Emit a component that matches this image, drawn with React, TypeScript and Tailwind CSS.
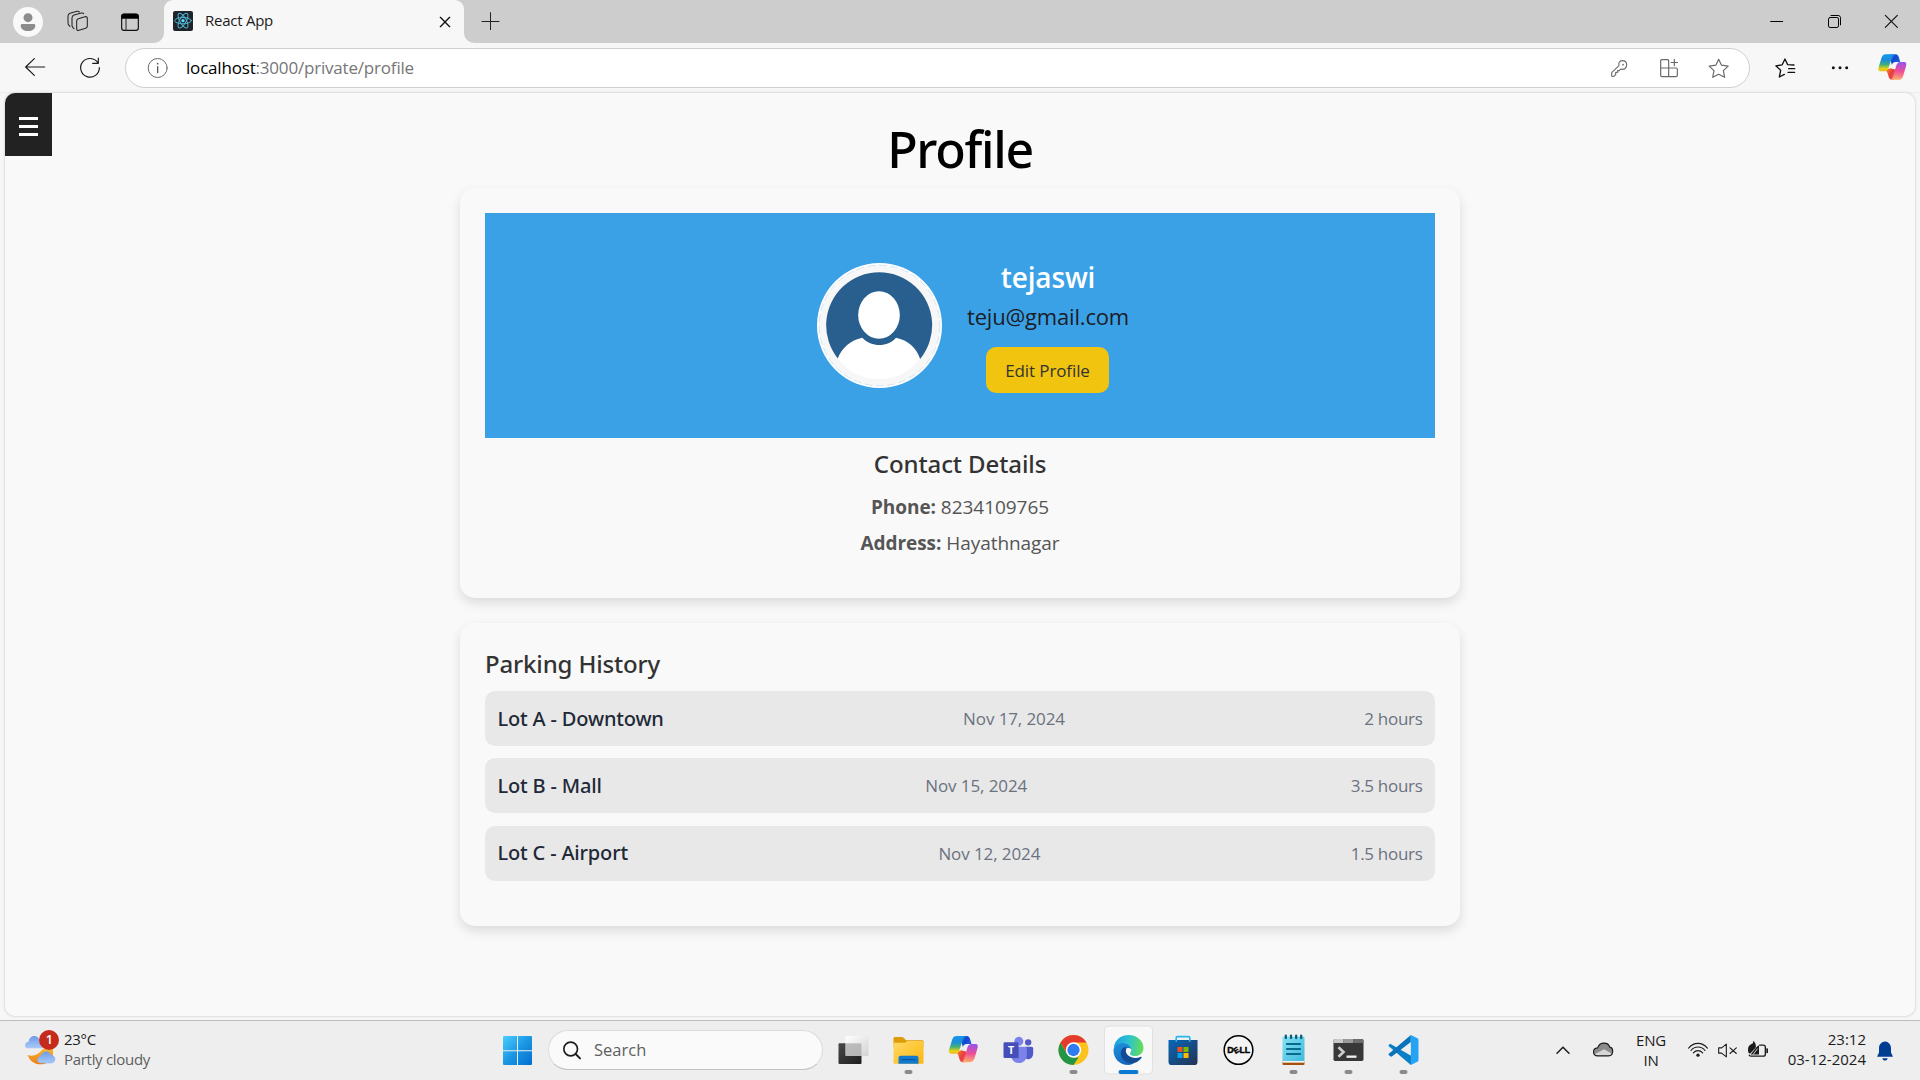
import type { ReactNode } from "react";

function Icon({ box, className, children }: { box: string; className: string; children: ReactNode }) {
  return (
    <svg viewBox={box} className={`shrink-0 ${className}`} fill="none" stroke="none" strokeLinecap="round" strokeLinejoin="round">
      {children}
    </svg>
  );
}

/* ---------- Copilot mark, shared by the toolbar and the taskbar ---------- */
function CopilotMark({ id }: { id: string }) {
  return (
    <>
      <defs>
        <linearGradient id={`${id}a`} x1="0" y1="0" x2="0" y2="1">
          <stop offset="0" stopColor="#1496f0" />
          <stop offset="0.35" stopColor="#1c8fd6" />
          <stop offset="0.6" stopColor="#3fae7e" />
          <stop offset="0.85" stopColor="#e8d312" />
          <stop offset="1" stopColor="#f7b51c" />
        </linearGradient>
        <linearGradient id={`${id}b`} x1="0.4" y1="0" x2="0.3" y2="1">
          <stop offset="0" stopColor="#9a52ec" />
          <stop offset="0.5" stopColor="#ee4f96" />
          <stop offset="1" stopColor="#ffb067" />
        </linearGradient>
        <linearGradient id={`${id}c`} x1="0" y1="0" x2="1" y2="0.6">
          <stop offset="0" stopColor="#25b2ef" />
          <stop offset="0.5" stopColor="#1345d0" />
          <stop offset="1" stopColor="#1a62dc" />
        </linearGradient>
        <linearGradient id={`${id}d`} x1="0" y1="0" x2="1" y2="0.6">
          <stop offset="0" stopColor="#f79a25" />
          <stop offset="0.6" stopColor="#e83e3a" />
          <stop offset="1" stopColor="#f25a6c" />
        </linearGradient>
      </defs>
      <path d="M34 4h20c7 0 9 4 11 10l4 14H55c-7 0-10 3-12 9z" fill={`url(#${id}c)`} />
      <path d="M20 54c6 0 8 3 10 10l3 10c2 6 4 9 11 9h5l10-30-20-6z" fill={`url(#${id}d)`} />
      <path d="M25 4h28c-6 0-8 4-10 10L33 46c-2 7-5 11-12 11H9C1 57 0 51 2 44l9-29C14 7 17 4 25 4z" fill={`url(#${id}a)`} />
      <path d="M63 83H37c6 0 8-4 10-10l9-32c2-8 6-13 13-13h11c8 0 9 6 7 13l-9 30c-3 8-7 12-15 12z" fill={`url(#${id}b)`} />
    </>
  );
}

/* ---------- Browser ---------- */
function TitleBar() {
  return (
    <div className="flex h-[43px] items-center bg-[#cdcdcd]">
      <Icon box="36 15 96 96" className="ml-3 h-8 w-8">
        <circle cx="84" cy="63" r="45" fill="#f9f9f9" />
        <circle cx="84" cy="50" r="13.5" fill="#8c8c8c" />
        <path d="M67 69h34c3 0 5 2 5 5 0 9-9 16-22 16s-22-7-22-16c0-3 2-5 5-5z" fill="#8c8c8c" />
      </Icon>
      <Icon box="198 30 69 69" className="ml-[22px] h-[23px] w-[23px]">
        <g stroke="#262626" strokeWidth="3.2">
          <path d="M235 56l20-6q7-1 7 6v22q0 5-5 7l-20 6q-7 2-7-5V63q0-5 5-7z" />
          <path d="M222 86l-3-3q-3-3-3-7V54q0-7 6-9l22-6q4-1 7 2" />
          <path d="M210 79l-3-3q-3-3-3-7V49q0-7 6-9l21-6q4-1 7 2" />
        </g>
      </Icon>
      <Icon box="360 33 60 60" className="ml-[31px] h-5 w-5">
        <rect x="365" y="39" width="50" height="49" rx="7" stroke="#111" strokeWidth="3.5" />
        <path d="M364 53v-8c0-4 3-7 7-7h38c4 0 7 3 7 7v8z" fill="#000" />
        <path d="M378 53v35" stroke="#222" strokeWidth="3" />
      </Icon>
      <div className="ml-[14px] flex h-full items-end">
        <svg className="h-[10px] w-[10px]" viewBox="0 0 10 10"><path d="M10 0v10H0A10 10 0 0 0 10 0z" fill="#f7f7f7" /></svg>
        <div className="flex h-full w-[300px] items-center rounded-t-[9px] bg-[#f7f7f7]">
          <Icon box="519 36 60 60" className="mb-px ml-[9px] h-5 w-5">
            <rect x="519" y="36" width="60" height="60" rx="6" fill="#20232a" />
            <g stroke="#4fb4d0" strokeWidth="3">
              <ellipse cx="549" cy="65" rx="25" ry="9.5" />
              <ellipse cx="549" cy="65" rx="25" ry="9.5" transform="rotate(60 549 65)" />
              <ellipse cx="549" cy="65" rx="25" ry="9.5" transform="rotate(120 549 65)" />
            </g>
            <circle cx="549" cy="65" r="5" fill="#61dafb" />
          </Icon>
          <span className="mb-[3px] ml-[12px] text-[15px] leading-5 tracking-[-0.25px] text-[#1b1b1b]">React App</span>
          <Icon box="1315 48 36 36" className="mr-[13px] ml-auto h-3 w-3">
            <path d="M1319 52l28 28M1347 52l-28 28" stroke="#111" strokeWidth="4" />
          </Icon>
        </div>
        <svg className="h-[10px] w-[10px]" viewBox="0 0 10 10"><path d="M0 0v10h10A10 10 0 0 1 0 0z" fill="#f7f7f7" /></svg>
      </div>
      <Icon box="1443 36 57 57" className="mb-px ml-[7px] h-[19px] w-[19px]">
        <path d="M1446 64.500h51M1471.500 38v51" stroke="#222" strokeWidth="3" />
      </Icon>
      <div className="mr-[21px] ml-auto flex items-center gap-[42px]">
        <Icon box="627 42 48 48" className="h-4 w-4"><path d="M632 64.500h36" stroke="#000" strokeWidth="3" /></Icon>
        <Icon box="798 42 45 45" className="h-[15px] w-[15px]">
          <rect x="802.500" y="52.500" width="30" height="30" rx="5" stroke="#000" strokeWidth="3" />
          <path d="M810 46.500h21c5 0 7.500 3 7.500 8v20" stroke="#000" strokeWidth="3" />
        </Icon>
        <Icon box="972 42 45 45" className="h-[15px] w-[15px]"><path d="M976 46l36 36M1012 46l-36 36" stroke="#111" strokeWidth="3.500" /></Icon>
      </div>
    </div>
  );
}

function Toolbar() {
  return (
    <div className="flex h-[49px] items-center bg-[#f7f7f7] pt-px">
      <Icon box="72 171 66 66" className="ml-6 h-[22px] w-[22px]">
        <path d="M134 201H78M103 176l-26 25 26 25" stroke="#1a1a1a" strokeWidth="3.500" />
      </Icon>
      <Icon box="237 171 66 66" className="ml-[33px] h-[22px] w-[22px]">
        <path d="M294 189A28 28 0 1 0 298 203M295 174v16h-17" stroke="#1a1a1a" strokeWidth="3.500" />
      </Icon>
      <div className="ml-6 flex h-10 w-[1625px] items-center rounded-full border border-[#cfcfcf] bg-white">
        <Icon box="441 171 66 66" className="ml-[21px] h-[22px] w-[22px]">
          <circle cx="473" cy="204" r="28.500" stroke="#6a6a6a" strokeWidth="3" />
          <path d="M473 200v18" stroke="#5a5a5a" strokeWidth="4" />
          <circle cx="473" cy="191" r="2.500" fill="#5a5a5a" />
        </Icon>
        <span className="ml-[17px] text-[17px] leading-6 tracking-[-0.19px] text-[#767676]">
          <span className="text-black">localhost</span>:3000/private/profile
        </span>
        <Icon box="150 174 54 63" className="ml-auto h-[21px] w-[18px]">
          <path d="M155 228v-10l22-21c-3-10 4-15 10-15 8 0 13 6 13 13 0 8-6 14-14 13l-4-1-4 5h-5v5h-6v7l-4 4c-5 2-8 2-8 0z" stroke="#707070" strokeWidth="3.500" />
          <circle cx="189" cy="194" r="2.500" fill="#666" />
        </Icon>
        <Icon box="297 174 60 60" className="ml-[31px] h-5 w-5">
          <path d="M326 204v-22q0-3-3-3h-18q-3 0-3 3v44q0 4 4 4h42q4 0 4-4v-18q0-4-4-4h-46M326 204v26M343 178v19M333.500 187.500h19" stroke="#686868" strokeWidth="3.500" />
        </Icon>
        <Icon box="444 171 66 66" className="mr-[19px] ml-[29px] h-[22px] w-[22px]">
          <path d="M476 178l8.500 17.500 20 3-14.500 13.500 4 20-18-9.500-18 9.500 4-20-14.500-13.500 20-3z" stroke="#686868" strokeWidth="3.500" />
        </Icon>
      </div>
      <Icon box="642 171 66 66" className="ml-6 h-[22px] w-[22px]">
        <path d="M673 223l-15 8 4-20-14.500-13.500 19-3L675 177l8 17 19 1M686 206h18M684 217h20" stroke="#111" strokeWidth="4" />
      </Icon>
      <Icon box="810 180 60 48" className="ml-[34px] h-4 w-5">
        <g fill="#111"><circle cx="820" cy="203" r="4.500" /><circle cx="840" cy="203" r="4.500" /><circle cx="860" cy="203" r="4.500" /></g>
      </Icon>
      <Icon box="0 0 90 90" className="mb-px ml-7 h-[29px] w-[29px]"><CopilotMark id="tb" /></Icon>
    </div>
  );
}

/* ---------- Page ---------- */
const history = [
  { lot: "Lot A - Downtown", date: "Nov 17, 2024", time: "2 hours" },
  { lot: "Lot B - Mall", date: "Nov 15, 2024", time: "3.5 hours" },
  { lot: "Lot C - Airport", date: "Nov 12, 2024", time: "1.5 hours" },
];

function Avatar() {
  return (
    <Icon box="111 459 375 375" className="mt-[50px] h-[125px] w-[125px]">
      <circle cx="298.500" cy="646.500" r="187.500" fill="#fff" />
      <circle cx="298.500" cy="646.500" r="181" fill="#f7f7f7" stroke="#c9e1f2" strokeWidth="2.500" strokeDasharray="22 12" />
      <path d="M174 746A159 159 0 1 1 421 746L298 770z" fill="#285f8f" />
      <path d="M173 746C184 715 211 690 247 683c27 29 76 29 101 0 36 7 63 32 72 63-28 38-72 61-122 61s-97-23-125-61z" fill="#fff" />
      <ellipse cx="297" cy="615" rx="62.500" ry="71.500" fill="#fff" />
    </Icon>
  );
}

function Page() {
  return (
    <div className="flex flex-1 bg-[#f7f7f7] px-[5px] pb-1">
      <main className="relative w-full overflow-hidden rounded-[10px] bg-[#f9f9f9] shadow-[0_0_2px_1px_#dedede]">
        <button className="absolute top-0 left-0 flex h-[63px] w-[47px] flex-col items-center justify-center gap-[5px] bg-[#222] pt-[3px]">
          <span className="h-[3px] w-[19px] bg-white" />
          <span className="h-[3px] w-[19px] bg-white" />
          <span className="h-[3px] w-[19px] bg-white" />
        </button>
        <div className="mx-auto w-[1000px]">
          <h1 className="mt-[26px] mb-[9px] h-[60px] text-center font-['Noto_Sans'] text-[50px] leading-[60px] font-medium tracking-[-1.3px] text-black">Profile</h1>
          <section className="h-[410px] rounded-[15px] bg-[#f9f9f9] px-[25px] pt-[25px] shadow-[0_5px_12px_rgba(0,0,0,0.12)]">
            <div className="flex h-[225px] bg-[#3ba1e7] pl-[332px]">
              <Avatar />
              <div className="mt-[46px] ml-[25px] flex w-[162px] flex-col items-center whitespace-nowrap">
                <h2 className="text-[28px] leading-9 font-semibold tracking-[-0.15px] text-white">tejaswi</h2>
                <p className="mt-[5px] text-[22px] leading-8 tracking-[-0.18px] text-[#1c1c24]">teju@gmail.com</p>
                <button className="mt-[15px] mr-px h-[46px] w-[123px] rounded-[10px] bg-[#f1c40f] pt-px text-[17px] tracking-[-0.1px] text-[#333]">Edit Profile</button>
              </div>
            </div>
            <h3 className="mt-[11px] text-center font-['Noto_Sans'] text-2xl leading-[30px] font-medium tracking-[-0.1px] text-[#333]">Contact Details</h3>
            <div className="mt-[10px] text-center text-[19px] leading-9 tracking-[-0.05px] text-[#555]">
              <p><strong className="font-bold">Phone:</strong> 8234109765</p>
              <p><strong className="font-bold">Address:</strong> Hayathnagar</p>
            </div>
          </section>
          <section className="mt-[25px] h-[303px] rounded-[15px] bg-[#f9f9f9] px-[25px] pt-[26px] shadow-[0_5px_12px_rgba(0,0,0,0.12)]">
            <h3 className="font-['Noto_Sans'] text-2xl leading-[30px] font-medium tracking-[-0.15px] text-[#333]">Parking History</h3>
            <ul className="mt-[12px] flex flex-col gap-[12.4px]">
              {history.map((h) => (
                <li key={h.lot} className="flex h-[55px] items-center justify-between rounded-[10px] bg-[#e8e8e8] px-[12.5px]">
                  <span className="font-['Noto_Sans'] text-[20px] font-medium tracking-[-0.17px] text-[#1f2937]">{h.lot}</span>
                  <span className="text-[17px] tracking-[-0.1px] text-[#6b7280]">{h.date}</span>
                  <span className="text-[17px] tracking-[-0.3px] text-[#6b7280]">{h.time}</span>
                </li>
              ))}
            </ul>
          </section>
        </div>
      </main>
    </div>
  );
}

/* ---------- Taskbar ---------- */
function Cell({ box, children }: { box: string; children: ReactNode }) {
  return <Icon box={box} className="h-[59px] w-[55px]">{children}</Icon>;
}

function Running({ x }: { x: number }) {
  return <rect x={x - 12} y="180" width="24" height="12" rx="6" fill="#8a8a8a" />;
}

function Taskbar() {
  return (
    <footer className="flex h-[60px] items-center border-t border-[#bdbdbd] bg-[#eeeeee] text-[15px] leading-5 text-[#1c1c1c]">
      <div className="flex w-[490px] items-center pb-[3px] pl-6">
        <Icon box="72 140 108 111" className="mt-[-4px] h-[37px] w-9">
          <defs>
            <linearGradient id="cloud" x1="0" y1="0" x2="0" y2="1"><stop offset="0" stopColor="#6f9ae8" /><stop offset="1" stopColor="#a9cbf8" /></linearGradient>
            <linearGradient id="moon" x1="0" y1="0" x2="0" y2="1"><stop offset="0" stopColor="#f5b62c" /><stop offset="1" stopColor="#ee7d17" /></linearGradient>
          </defs>
          <path d="M83 218c15 6 32 0 45-17l31-1v18c0 15-17 28-38 28-18 0-33-11-38-28z" fill="url(#moon)" />
          <path d="M84 198c-12 0-12-19 2-20 2-20 26-22 31-7l10 27z" fill="url(#cloud)" />
          <path d="M122 242c-13 0-13-18 0-20 4-18 27-18 31-3 15 0 16 22 2 23z" fill="url(#cloud)" stroke="#81a7ea" strokeWidth="1.500" />
          <circle cx="147" cy="173" r="30" fill="#c42b1c" />
          <text x="148" y="186" textAnchor="middle" fontSize="38" fontWeight="600" fill="#fff" className="font-['Open_Sans']">1</text>
        </Icon>
        <div className="ml-1 tracking-[-0.3px]">
          <p>23°C</p>
          <p className="text-[#5f5f5f]">Partly cloudy</p>
        </div>
      </div>
      <Cell box="30 33 165 177">
        <defs><linearGradient id="win" x1="0" y1="0" x2="1" y2="1"><stop offset="0" stopColor="#4ccfff" /><stop offset="0.5" stopColor="#1b96e3" /><stop offset="1" stopColor="#006fd0" /></linearGradient></defs>
        <path d="M72 78h39v43H69V81q0-3 3-3zM114 78h39q3 0 3 3v40h-42zM69 124h42v41H72q-3 0-3-3zM114 124h42v38q0 3-3 3h-39z" fill="url(#win)" />
      </Cell>
      <div className="mb-px ml-[3px] flex h-10 w-[275px] items-center rounded-full border border-[#dcdcdc] border-b-[#c2c2c2] bg-[#fafafa]">
        <Icon box="246 90 60 60" className="ml-[13px] h-5 w-5">
          <circle cx="272" cy="117" r="20.500" stroke="#1d1d1d" strokeWidth="5" />
          <path d="M287 132l13 13" stroke="#1d1d1d" strokeWidth="6" />
        </Icon>
        <span className="ml-3 text-[16.5px] text-[#606060]">Search</span>
      </div>
      <div className="ml-[3px] flex">
        <Cell box="1039.500 33 165 177">
          <defs>
            <linearGradient id="tvd" x1="0" y1="0" x2="1" y2="1"><stop offset="0" stopColor="#494949" /><stop offset="1" stopColor="#1e1e1e" /></linearGradient>
            <linearGradient id="tvl" x1="0" y1="0" x2="1" y2="1"><stop offset="0" stopColor="#fff" /><stop offset="1" stopColor="#d3d3d3" /></linearGradient>
          </defs>
          <rect x="1077" y="100" width="69" height="62" rx="3" fill="url(#tvd)" />
          <rect x="1098" y="78" width="69" height="60" rx="3" fill="url(#tvl)" />
          <path d="M1098 100h48v38h-48z" fill="#a9a9a9" opacity="0.75" />
        </Cell>
        <Cell box="1204.500 33 165 177">
          <defs>
            <linearGradient id="fol" x1="0" y1="0" x2="1" y2="1"><stop offset="0" stopColor="#ffd966" /><stop offset="1" stopColor="#fbb70c" /></linearGradient>
          </defs>
          <path d="M1245 81h22q4 0 6 3l7 7h49q3 0 3 3v18h-90V84q0-3 3-3z" fill="#dd9d09" />
          <path d="M1242 98h34l8-5h45q3 0 3 3v62q0 3-3 3h-84q-3 0-3-3z" fill="url(#fol)" />
          <path d="M1257 161v-17q0-7 7-7h46q7 0 7 7v17z" fill="#0f7ad0" />
          <path d="M1267 149h40" stroke="#0a4f96" strokeWidth="3" />
          <Running x={1287} />
        </Cell>
        <Cell box="-40.500 33 165 177"><g transform="translate(-3 74)"><CopilotMark id="task" /></g></Cell>
        <Cell box="124.500 33 165 177">
          <circle cx="236" cy="97" r="9.500" fill="#5059c9" />
          <path d="M226 110h20q5 0 5 5v15c0 11-7 18-15 18-5 0-10-3-10-9z" fill="#5059c9" />
          <circle cx="208" cy="94" r="13.500" fill="#7b83eb" />
          <path d="M190 110h37q5 0 5 5v19c0 15-10 25-24 25s-23-10-23-25v-19q0-5 5-5z" fill="#7b83eb" />
          <path d="M185 110h22v35h-20z" fill="#5a61c8" opacity="0.7" />
          <rect x="162" y="97" width="45" height="47" rx="4" fill="#464eb8" />
          <text x="184.500" y="132" textAnchor="middle" fontSize="32" fontWeight="700" fill="#fff" className="font-['Open_Sans']">T</text>
        </Cell>
        <Cell box="289.500 33 165 177">
          <circle cx="372" cy="120" r="45" fill="#fcc31e" />
          <path d="M333 97.500l19.500 33.500 19.500 11.500h15l-15 22.500A45 45 0 0 1 333 97.500z" fill="#229646" />
          <path d="M333 97.500a45 45 0 0 1 78 0H372l-19 33z" fill="#e33b2e" />
          <circle cx="372" cy="120" r="23" fill="#fff" />
          <circle cx="372" cy="120" r="18.500" fill="#2f7cf0" />
          <Running x={372} />
        </Cell>
        <Cell box="454.500 33 165 177">
          <defs>
            <linearGradient id="eda" x1="0" y1="0.3" x2="1" y2="0.4"><stop offset="0" stopColor="#1c9fe3" /><stop offset="0.5" stopColor="#2cc3cf" /><stop offset="1" stopColor="#66dd56" /></linearGradient>
            <linearGradient id="edb" x1="0" y1="0" x2="0.4" y2="1"><stop offset="0" stopColor="#1a94de" /><stop offset="1" stopColor="#1668bd" /></linearGradient>
          </defs>
          <rect x="465" y="48" width="144" height="144" rx="12" fill="#f8f8f8" stroke="#e1e1e1" strokeWidth="3" />
          <path d="M493 113c2-22 21-38 44-38 26 0 45 19 45 38 0 16-12 25-25 25-11 0-17-4-15-9 3-5 5-9 2-15-4-11-17-16-29-14-10 2-18 7-22 13z" fill="url(#eda)" />
          <path d="M492 119c2-13 14-20 27-20 14 0 25 8 26 18-8-7-22-2-24 11-3 19 16 30 36 28-6 6-13 9-20 9-26 0-46-20-45-46z" fill="url(#edb)" />
          <path d="M528 111c-12 3-16 14-13 26 5 17 25 27 41 21 9-3 15-8 20-15 1-3-1-4-4-2-8 4-19 4-28 0-12-5-17-15-14-24 1-4 2-5-2-6z" fill="#134b94" />
          <rect x="507" y="180" width="60" height="12" rx="6" fill="#0a78d4" />
        </Cell>
        <Cell box="619.500 33 165 177">
          <defs><linearGradient id="sto" x1="0" y1="0" x2="1" y2="1"><stop offset="0" stopColor="#0867b8" /><stop offset="1" stopColor="#243253" /></linearGradient></defs>
          <path d="M680 93V84q0-4 4-4h33q4 0 4 4v9" stroke="#27b7ee" strokeWidth="5" strokeLinecap="butt" />
          <path d="M657 90h87v65q0 10-10 10h-67q-10 0-10-10z" fill="url(#sto)" />
          <path d="M678 90h5v5h-5zM718 90h5v5h-5z" fill="#27b7ee" />
          <path d="M684 111h15v15h-15z" fill="#f25022" />
          <path d="M702 111h15v15h-15z" fill="#7fba00" />
          <path d="M684 129h15v15h-15z" fill="#00a4ef" />
          <path d="M702 129h15v15h-15z" fill="#ffb900" />
        </Cell>
        <Cell box="784.500 33 165 177">
          <circle cx="867" cy="120" r="43" stroke="#000" strokeWidth="4.500" fill="#f4f4f4" />
          <g fill="#000" stroke="#000" strokeWidth="1.200" fontWeight="700" className="font-['Liberation_Sans']">
            <text x="833" y="129" fontSize="26" textLength="19" lengthAdjust="spacingAndGlyphs">D</text>
            <text x="860" y="129" fontSize="24" textAnchor="middle" transform="rotate(-32 860 120)">E</text>
            <text x="870" y="129" fontSize="26" textLength="32" lengthAdjust="spacingAndGlyphs">LL</text>
          </g>
        </Cell>
        <Cell box="949.500 33 165 177">
          <defs><linearGradient id="note" x1="0" y1="0" x2="1" y2="1"><stop offset="0" stopColor="#83e2f5" /><stop offset="1" stopColor="#41b9dc" /></linearGradient></defs>
          <rect x="999" y="150" width="66" height="15" rx="3" fill="#a4510c" />
          <rect x="999" y="146" width="66" height="12" fill="#f5f5f5" />
          <rect x="999" y="80" width="66" height="73" rx="3" fill="url(#note)" />
          <path d="M1009 77v7M1024.500 77v7M1040 77v7M1055 77v7" stroke="#0c5c7d" strokeWidth="7" />
          <path d="M1012 102h40M1012 117h40M1012 132h40" stroke="#0a6a8d" strokeWidth="5.500" />
          <Running x={1032} />
        </Cell>
        <Cell box="1114.500 33 165 177">
          <rect x="1152" y="87" width="90" height="66" rx="5" fill="#383838" />
          <path d="M1157 87h25v12h-30v-7q0-5 5-5z" fill="#c9c9c9" />
          <path d="M1182 87h30v12h-30z" fill="#9a9a9a" />
          <path d="M1212 87h25q5 0 5 5v7h-30z" fill="#6d6d6d" />
          <path d="M1167 112l15 14-15 14" stroke="#ccc" strokeWidth="8" strokeLinecap="butt" strokeLinejoin="miter" />
          <path d="M1191 140h30" stroke="#eee" strokeWidth="7" strokeLinecap="butt" />
          <Running x={1197} />
        </Cell>
        <Cell box="1279.500 33 165 177">
          <path d="M1322 101l-4 4q-2 2 0 4l66 56 6-25z" fill="#0a7fc7" />
          <path d="M1384 75l-66 56q-2 2 0 4l4 4q3 2 6 0l56-43z" fill="#0a72bb" />
          <path d="M1384 75l20 10q3 2 3 5v60q0 3-3 5l-20 10z" fill="#24a4f2" />
          <Running x={1362} />
        </Cell>
      </div>
      <div className="ml-auto flex items-center pr-[25px]">
        <Icon box="99 181.500 60 60" className="h-5 w-5"><path d="M111 218l18-18 18 18" stroke="#1c1c1c" strokeWidth="4.500" /></Icon>
        <Icon box="210 175.500 81 72" className="ml-[17px] h-6 w-[27px]">
          <path d="M233 226c-16 0-17-23 0-24 6-19 32-18 36-2 13 2 12 26-3 26z" fill="#8b8b8b" />
          <path d="M224 221l28-15 23 13c-2 5-5 7-10 7h-32c-4 0-7-2-9-5z" fill="#d6d6d6" />
          <path d="M233 226c-16 0-17-23 0-24 6-19 32-18 36-2 13 2 12 26-3 26z" stroke="#1c1c1c" strokeWidth="3.500" />
        </Icon>
        <div className="ml-[14px] w-10 pb-[2px] text-center tracking-[-0.2px]"><p>ENG</p><p>IN</p></div>
        <Icon box="498 175.500 72 72" className="ml-[15px] h-6 w-6">
          <g stroke="#1c1c1c" strokeWidth="3.500">
            <path d="M506 203c15-19 41-19 56 0" />
            <path d="M513 210c11-14 31-14 42 0" />
            <path d="M520 217c8-9 20-9 28 0" />
          </g>
          <circle cx="534" cy="224" r="5" fill="#1c1c1c" />
        </Icon>
        <Icon box="588 175.500 69 72" className="ml-[6px] h-6 w-[23px]">
          <path d="M596 202h9l14-11v38l-14-11h-9zM630 202l19 17M649 202l-19 17" stroke="#1c1c1c" strokeWidth="3.300" />
        </Icon>
        <Icon box="678 175.500 72 72" className="ml-[7px] h-6 w-6">
          <path d="M688 224q1 3 6 3h36q6 0 6-6v-21q0-6-6-6h-11" stroke="#1c1c1c" strokeWidth="4" />
          <path d="M739 203h2q3 0 3 3v9q0 3-3 3h-2z" fill="#1c1c1c" />
          <path d="M685 216c-3-17 2-23 13-27l3-8c5 7 8 13 6 21l-17 18zM692 222l19-24 6-4v28z" fill="#1c1c1c" />
          <path d="M700 221l12-16" stroke="#eee" strokeWidth="2.500" />
        </Icon>
        <div className="w-24 pb-[3px] text-right"><p>23:12</p><p>03-12-2024</p></div>
        <Icon box="1065 181.500 60 60" className="ml-[9px] h-5 w-5">
          <path d="M1071 229l6-13v-13c0-11 8-20 18-20s18 9 18 20v13l6 13zM1087 233h16c-1 5-4 7-8 7s-7-2-8-7z" fill="#003e92" />
        </Icon>
      </div>
    </footer>
  );
}

export default function App() {
  return (
    <div className="flex h-[1080px] w-[1920px] flex-col overflow-hidden bg-[#f7f7f7] font-['Open_Sans',sans-serif]">
      <TitleBar />
      <Toolbar />
      <div className="h-px shrink-0 bg-[#ececec]" />
      <Page />
      <Taskbar />
    </div>
  );
}
